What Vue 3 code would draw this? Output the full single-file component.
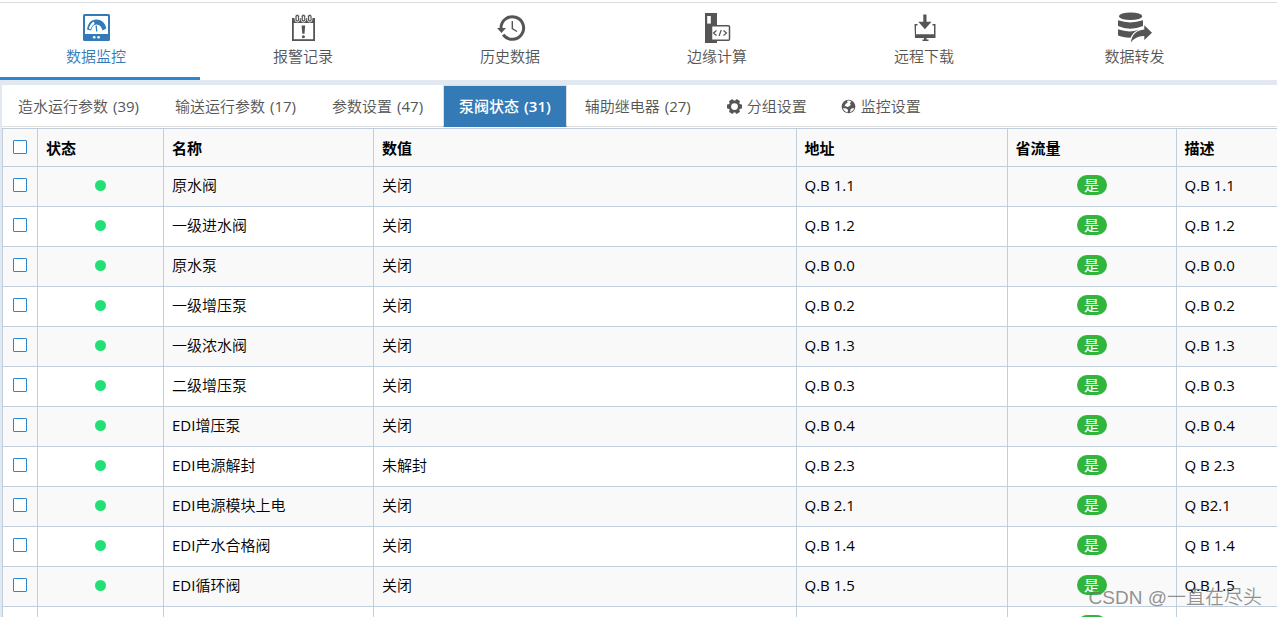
<script setup>
import { ref } from 'vue'

const navItems = [
  { id: 'monitor', label: '数据监控' },
  { id: 'alarm', label: '报警记录' },
  { id: 'history', label: '历史数据' },
  { id: 'edge', label: '边缘计算' },
  { id: 'download', label: '远程下载' },
  { id: 'forward', label: '数据转发' },
]
const activeNav = ref('monitor')

const tabs = [
  { id: 'water', label: '造水运行参数', count: 39 },
  { id: 'transport', label: '输送运行参数', count: 17 },
  { id: 'params', label: '参数设置', count: 47 },
  { id: 'pump', label: '泵阀状态', count: 31 },
  { id: 'relay', label: '辅助继电器', count: 27 },
  { id: 'group', label: '分组设置', icon: 'gear' },
  { id: 'watch', label: '监控设置', icon: 'globe' },
]
const activeTab = ref('pump')

const rows = ref([
  { name: '原水阀', value: '关闭', address: 'Q.B 1.1', note: 'Q.B 1.1' },
  { name: '一级进水阀', value: '关闭', address: 'Q.B 1.2', note: 'Q.B 1.2' },
  { name: '原水泵', value: '关闭', address: 'Q.B 0.0', note: 'Q.B 0.0' },
  { name: '一级增压泵', value: '关闭', address: 'Q.B 0.2', note: 'Q.B 0.2' },
  { name: '一级浓水阀', value: '关闭', address: 'Q.B 1.3', note: 'Q.B 1.3' },
  { name: '二级增压泵', value: '关闭', address: 'Q.B 0.3', note: 'Q.B 0.3' },
  { system: 'EDI', name: '增压泵', value: '关闭', address: 'Q.B 0.4', note: 'Q.B 0.4' },
  { system: 'EDI', name: '电源解封', value: '未解封', address: 'Q.B 2.3', note: 'Q B 2.3' },
  { system: 'EDI', name: '电源模块上电', value: '关闭', address: 'Q.B 2.1', note: 'Q B2.1' },
  { system: 'EDI', name: '产水合格阀', value: '关闭', address: 'Q.B 1.4', note: 'Q B 1.4' },
  { system: 'EDI', name: '循环阀', value: '关闭', address: 'Q.B 1.5', note: 'Q.B 1.5' },
  { name: '', value: '', address: '', note: '' },
])
</script>

<template>
  <div class="page">
    <nav class="nav">
      <a
        v-for="item in navItems"
        :key="item.id"
        href="#"
        class="nav-item"
        :class="{ active: item.id === activeNav }"
        @click.prevent="activeNav = item.id"
      >
        <svg class="nav-icon" viewBox="0 0 34 32" aria-hidden="true">
          <g v-if="item.id === 'monitor'">
            <rect x="4" y="3" width="27" height="27" rx="1.5" fill="currentColor" />
            <rect x="6" y="5" width="23" height="18" fill="#fff" />
            <path d="M8 18.500C9 12 12 8.500 17.500 8.500S26.500 12.500 27.300 17.500L23.500 19.500C22.500 15.500 20.500 13.500 17.500 13.500S13 15.500 12 19.500z" fill="currentColor" />
            <path d="M9.800 17.500Q11.500 12 15 10.500L15.500 13Q12.500 14.500 11.500 18.200z" fill="#fff" />
            <path d="M16.500 14.500h1.300l.6 6h-1.300z" fill="currentColor" />
            <circle cx="15.200" cy="26.300" r="1.300" fill="#fff" />
            <circle cx="19.600" cy="26.300" r="1.300" fill="#fff" />
          </g>
          <g v-else-if="item.id === 'alarm'">
            <path d="M6 7h23v23H6z" fill="currentColor" />
            <path d="M7.800 12h19.400v16.200H7.800z" fill="#fff" />
            <g fill="currentColor" stroke="#fff" stroke-width=".8">
              <rect x="9" y="3.300" width="4.500" height="7.700" rx="2.200" />
              <rect x="15.200" y="3.300" width="4.500" height="7.700" rx="2.200" />
              <rect x="21.500" y="3.300" width="4.500" height="7.700" rx="2.200" />
            </g>
            <path d="M11.300 5.200v4M17.500 5.200v4M23.800 5.200v4" stroke="#fff" stroke-width="1.300" />
            <path d="M15.600 14.500h3.600l-.7 8.300h-2.200z" fill="currentColor" />
            <circle cx="17.400" cy="25.700" r="1.500" fill="currentColor" />
          </g>
          <g v-else-if="item.id === 'history'" fill="none" stroke="currentColor">
            <path d="M8 17A11.300 11.300 0 1 1 10.200 23.700" stroke-width="3" />
            <path d="M4 17h9l-4.500 5z" fill="currentColor" stroke="none" />
            <path d="M19.300 10v7.500l4.700 3" stroke-width="1.400" />
          </g>
          <g v-else-if="item.id === 'edge'">
            <path d="M5 2h12v30H5z" fill="currentColor" />
            <path d="M7.200 5h3.600v7.600H7.200z" fill="#fff" />
            <rect x="11.500" y="14.700" width="18" height="14.600" rx="1" fill="#fff" stroke="currentColor" stroke-width="1.500" />
            <path d="M16.500 19.500l-3 2.500l3 2.500M21.300 19l-2.300 6M23.500 19.500l3 2.500l-3 2.500" fill="none" stroke="currentColor" stroke-width="1.200" />
          </g>
          <g v-else-if="item.id === 'download'" fill="currentColor">
            <path d="M16.300 3.500h3.200v7.200h5l-6.600 7.600l-6.600-7.600h5z" />
            <path d="M7.500 13h3v1.500h-1.500v8.800h18v-8.800h-1.500V13h3v14h-9v1.500h2V30h-6v-1.500h1.500V27h-9z" />
          </g>
          <g v-else fill="currentColor">
            <ellipse cx="12.600" cy="5.300" rx="11.700" ry="3.800" />
            <path d="M0 9.300Q12 13.500 25 9.300V15Q12 20.500 0 15z" />
            <path d="M0 18.300Q12 22.500 21 18.500Q15 21 12.500 26.800Q4 26.500 0 24.600z" />
            <path d="M26.300 14.300L34 21.700L26.300 29V25Q18 24.500 12.800 31.500Q14.500 19.500 26.300 18.500z" />
          </g>
        </svg>
        <span class="nav-label">{{ item.label }}</span>
      </a>
    </nav>

    <main class="panel">
      <div class="tabs" role="tablist">
        <button
          v-for="tab in tabs"
          :key="tab.id"
          type="button"
          role="tab"
          class="tab"
          :class="{ active: tab.id === activeTab, counted: tab.count }"
          :aria-selected="tab.id === activeTab"
          @click="activeTab = tab.id"
        >
          <svg v-if="tab.icon === 'gear'" class="tab-icon" viewBox="0 0 16 16" aria-hidden="true">
            <g fill="currentColor">
              <rect v-for="n in 3" :key="n" x="5.600" y="0" width="4.800" height="16" rx="1" :transform="`rotate(${n * 60 - 30} 8 8)`" />
              <circle cx="8" cy="8" r="6.300" />
            </g>
            <circle cx="8" cy="8" r="3.600" fill="#fff" />
          </svg>
          <svg v-else-if="tab.icon === 'globe'" class="tab-icon" viewBox="0 0 16 16" aria-hidden="true">
            <circle cx="8" cy="8" r="7.300" fill="currentColor" />
            <path d="M6.500 1.800L9 1.500L11 3L9.500 4.500L10.500 6L8.500 8L6.500 8.500L5 7.500L3.500 8L5 5L7 4z" fill="#fff" />
            <path d="M2 9.500L5.500 10L7.500 11.500L7 14.500Q3.500 13.500 2 9.500zM10.500 10.500L13.500 9.500L14 10.500Q12.500 13.500 9.500 14.300z" fill="#fff" />
          </svg>
          <span>{{ tab.label }}</span>
          <span v-if="tab.count" class="count">({{ tab.count }})</span>
        </button>
      </div>

      <table class="grid">
        <colgroup>
          <col class="col-check" />
          <col class="col-state" />
          <col class="col-name" />
          <col />
          <col class="col-address" />
          <col class="col-save" />
          <col class="col-note" />
        </colgroup>
        <thead>
          <tr>
            <th class="center"><input type="checkbox" class="check" aria-label="全选" /></th>
            <th>状态</th>
            <th>名称</th>
            <th>数值</th>
            <th>地址</th>
            <th>省流量</th>
            <th>描述</th>
          </tr>
        </thead>
        <tbody>
          <tr v-for="(row, i) in rows" :key="i">
            <td class="center"><input type="checkbox" class="check" :aria-label="row.name" /></td>
            <td class="center"><span class="dot"></span></td>
            <td><span v-if="row.system" class="code">{{ row.system }}</span>{{ row.name }}</td>
            <td>{{ row.value }}</td>
            <td class="code">{{ row.address }}</td>
            <td class="center"><span class="badge">是</span></td>
            <td class="code">{{ row.note }}</td>
          </tr>
        </tbody>
      </table>
    </main>

    <div class="watermark">CSDN @一直在尽头</div>
  </div>
</template>

<style>
body {
  margin: 0;
  background: #fff;
}
</style>

<style scoped>
.page {
  position: relative;
  box-sizing: border-box;
  height: 100vh;
  overflow: hidden;
  padding-top: 2px;
  color: #000;
  font-family: "Open Sans", "Noto Sans CJK SC", sans-serif;
  font-size: 15px;
  font-weight: 350;
  line-height: 20px;
}

.nav {
  display: flex;
  gap: 7px;
  border-top: 1px solid #dadcde;
}

.nav-item {
  box-sizing: border-box;
  flex: none;
  display: flex;
  flex-direction: column;
  align-items: center;
  gap: 3px;
  width: 200px;
  padding: 8px 8px 11px 0;
  border-bottom: 3px solid transparent;
  color: #555;
  text-decoration: none;
}

.nav-item:last-child {
  width: 207px;
}

.nav-item.active {
  color: #337ab7;
  border-bottom-color: #2b88d0;
}

.nav-icon {
  width: 34px;
  height: 32px;
}

.panel {
  border-top: 5px solid #e1e8f0;
  border-left: 2px solid #e1e8f0;
}

.tabs {
  display: flex;
  gap: 2px;
  margin-bottom: 1px;
  border-bottom: 1px solid #ddd;
}

.tab {
  display: flex;
  align-items: center;
  gap: 5px;
  height: 42px;
  margin: 0 0 -1px;
  padding: 0 15px;
  border: 1px solid transparent;
  background: transparent;
  background-clip: padding-box;
  color: #555;
  font: inherit;
  white-space: nowrap;
  cursor: pointer;
}

.tab.counted {
  padding-right: 17px;
}

.count,
.code {
  font-weight: 400;
}

.tab.active {
  padding-right: 15px;
  border-color: #ddd #ddd #337ab7;
  background: #337ab7;
  background-clip: padding-box;
  color: #fff;
  font-weight: 500;
}

.tab.active .count {
  font-weight: 600;
}

.tab-icon {
  width: 15px;
  height: 15px;
}

.grid {
  width: 100%;
  table-layout: fixed;
  border-collapse: collapse;
}

.col-check { width: 35px; }
.col-state { width: 126px; }
.col-name { width: 210px; }
.col-address { width: 211px; }
.col-save { width: 169px; }
.col-note { width: 101px; }

th,
td {
  box-sizing: border-box;
  height: 40px;
  padding: 0 8px 3px;
  border: 1px solid #c1cedc;
  text-align: left;
  white-space: nowrap;
}

th:last-child,
td:last-child {
  border-right: 0;
}

th {
  height: 38px;
  padding-bottom: 0;
  background: #f9f9f9;
}

th.center {
  padding-bottom: 1px;
}

tbody tr:nth-child(odd) {
  background: #f9f9f9;
}

.center {
  text-align: center;
  padding-left: 0;
  padding-right: 0;
}

.check {
  appearance: none;
  box-sizing: border-box;
  display: block;
  width: 14px;
  height: 14px;
  margin: 0 auto;
  border: 1px solid #2b88d0;
  border-radius: 1px;
  background: #fff;
}

.check:checked {
  background: #2b88d0;
}

.dot {
  display: block;
  width: 11px;
  height: 11px;
  margin: 0 auto;
  border-radius: 50%;
  background: #23df78;
}

.badge {
  display: block;
  width: 30px;
  height: 20px;
  margin: 0 auto;
  border-radius: 10px;
  background: #32b53c;
  color: #fff;
  font-weight: 400;
}

.watermark {
  position: absolute;
  right: 15px;
  bottom: 5px;
  color: rgba(110, 110, 110, 0.75);
  font-family: "Liberation Sans", "Noto Sans CJK SC", sans-serif;
  font-size: 19px;
  line-height: 28px;
  white-space: nowrap;
}
</style>
